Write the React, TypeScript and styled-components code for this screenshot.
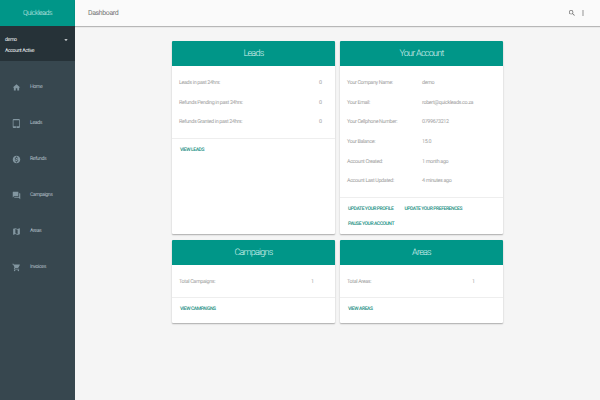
import React from "react";
import styled, { createGlobalStyle } from "styled-components";
import { MdHome, MdTabletMac, MdMonetizationOn, MdForum, MdMap, MdShoppingCart, MdSearch, MdMoreVert, MdArrowDropDown } from "react-icons/md";

const Global = createGlobalStyle`
  html, body { margin: 0; padding: 0; width: 600px; height: 400px; overflow: hidden; background: #f5f5f5; }
  * { box-sizing: border-box; }
  body { font-family: Roboto, "Liberation Sans", sans-serif; text-rendering: geometricPrecision; -webkit-font-smoothing: antialiased; }
`;

const Page = styled.div`
  display: flex;
  width: 600px;
  height: 400px;
`;
const Sidebar = styled.aside`
  width: 75px;
  flex: none;
  display: flex;
  flex-direction: column;
  background: #37474f;
`;
const Brand = styled.div`
  height: 26px;
  background: #009688;
  color: #d5f0ec;
  font-size: 7px;
  font-weight: 300;
  letter-spacing: -0.45px;
  display: flex;
  align-items: center;
  justify-content: center;
`;
const UserBox = styled.div`
  height: 35px;
  background: #263238;
  color: #eceff1;
  font-size: 5.2px;
  letter-spacing: -0.4px;
  padding: 10.5px 5px 0;
  display: flex;
  flex-direction: column;
  gap: 5.5px;
`;
const UserRow = styled.div`
  display: flex;
  justify-content: space-between;
  align-items: center;
  height: 6px;
  line-height: 6px;
`;
const Nav = styled.nav`
  display: flex;
  flex-direction: column;
  padding-top: 8px;
`;
const NavItem = styled.div`
  height: 36px;
  display: flex;
  align-items: center;
  padding-left: 12px;
  gap: 9px;
  color: #b0bec5;
  font-size: 5.2px;
  letter-spacing: -0.4px;
  svg { color: #8296a0; }
`;
const Main = styled.div`
  flex: 1;
  display: flex;
  flex-direction: column;
`;
const TopBar = styled.header`
  height: 26px;
  background: #fafafa;
  box-shadow: 0 1px 1px rgba(0,0,0,.25);
  display: flex;
  align-items: center;
  justify-content: space-between;
  padding: 0 13px 0 13px;
  color: #757575;
  font-size: 7px;
  letter-spacing: -0.4px;
`;
const TopIcons = styled.div`
  display: flex;
  align-items: center;
  gap: 3px;
  color: #666;
`;
const Grid = styled.main`
  display: grid;
  grid-template-columns: 163px 163px;
  grid-template-rows: 193px 83px;
  gap: 6px 5px;
  justify-content: start;
  margin: 15px 0 0 97px;
`;
const Card = styled.section`
  background: #fff;
  border-radius: 1px;
  box-shadow: 0 1px 1.5px rgba(0,0,0,.3);
  display: flex;
  flex-direction: column;
`;
const CardHead = styled.h2`
  margin: 0;
  height: 25px;
  flex: none;
  background: #009688;
  color: #d9f2ef;
  font-size: 9px;
  font-weight: 300;
  letter-spacing: -0.75px;
  display: flex;
  align-items: center;
  justify-content: center;
  border-radius: 1px 1px 0 0;
`;
const Rows = styled.div<{ $pad: number }>`
  padding: 7.5px 7px ${p => p.$pad}px;
  display: flex;
  flex-direction: column;
`;
const Row = styled.div<{ $valueAt: number }>`
  height: 19.6px;
  display: grid;
  grid-template-columns: ${p => p.$valueAt}px 1fr;
  align-items: center;
  color: #9e9e9e;
  font-size: 5.4px;
  font-weight: 400;
  letter-spacing: -0.36px;
`;
const Actions = styled.div`
  border-top: 1px solid #eee;
  padding: 3.5px 8px 0;
  display: flex;
  flex-wrap: wrap;
  column-gap: 11px;
`;
const Action = styled.a`
  height: 15px;
  display: flex;
  align-items: center;
  color: #1b8f83;
  font-size: 5px;
  font-weight: 500;
  letter-spacing: -0.42px;
  text-transform: uppercase;
`;

const nav = [
  { label: "Home", Icon: MdHome },
  { label: "Leads", Icon: MdTabletMac },
  { label: "Refunds", Icon: MdMonetizationOn },
  { label: "Campaigns", Icon: MdForum },
  { label: "Areas", Icon: MdMap },
  { label: "Invoices", Icon: MdShoppingCart },
];

type Info = { title: string; at: number; pad: number; rows: [string, string][]; actions: string[] };
const cards: Info[] = [
  { title: "Leads", at: 140, pad: 6, rows: [["Leads in past 24hrs:", "0"], ["Refunds Pending in past 24hrs:", "0"], ["Refunds Granted in past 24hrs:", "0"]], actions: ["View Leads"] },
  { title: "Your Account", at: 75, pad: 6, rows: [["Your Company Name:", "demo"], ["Your Email:", "robert@quickleads.co.za"], ["Your Cellphone Number:", "0799673212"], ["Your Balance:", "15.0"], ["Account Created:", "1 month ago"], ["Account Last Updated:", "4 minutes ago"]], actions: ["Update Your Profile", "Update Your Preferences", "Pause Your Account"] },
  { title: "Campaigns", at: 132, pad: 5, rows: [["Total Campaigns:", "1"]], actions: ["View Campaigns"] },
  { title: "Areas", at: 125, pad: 5, rows: [["Total Areas:", "1"]], actions: ["View Areas"] },
];

export default function App() {
  return (
    <Page>
      <Global />
      <Sidebar>
        <Brand>Quickleads</Brand>
        <UserBox>
          <UserRow>demo<MdArrowDropDown size={8} /></UserRow>
          <UserRow>Account Active</UserRow>
        </UserBox>
        <Nav>
          {nav.map(({ label, Icon }) => (
            <NavItem key={label}><Icon size={9} />{label}</NavItem>
          ))}
        </Nav>
      </Sidebar>
      <Main>
        <TopBar>
          Dashboard
          <TopIcons><MdSearch size={8} /><MdMoreVert size={8} /></TopIcons>
        </TopBar>
        <Grid>
          {cards.map(c => (
            <Card key={c.title}>
              <CardHead>{c.title}</CardHead>
              <Rows $pad={c.pad}>
                {c.rows.map(([k, v]) => (
                  <Row key={k} $valueAt={c.at}><span>{k}</span><span>{v}</span></Row>
                ))}
              </Rows>
              <Actions>
                {c.actions.map(a => <Action key={a}>{a}</Action>)}
              </Actions>
            </Card>
          ))}
        </Grid>
      </Main>
    </Page>
  );
}
